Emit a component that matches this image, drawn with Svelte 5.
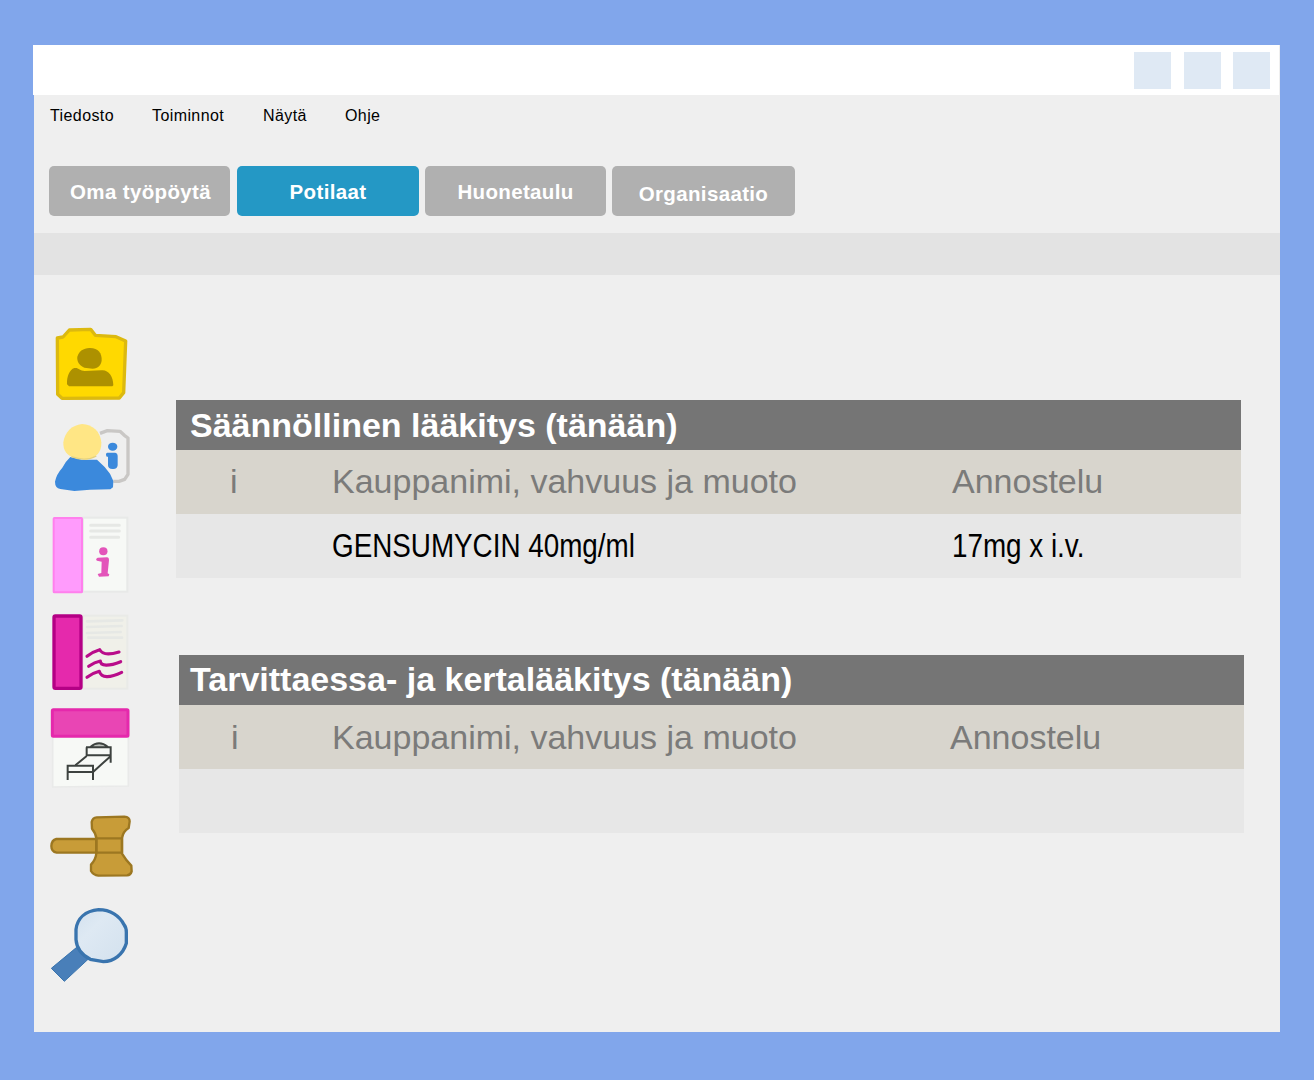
<script>
  const menu = [
    { label: 'Tiedosto', cls: 'file' },
    { label: 'Toiminnot', cls: 'actions' },
    { label: 'Näytä', cls: 'view' },
    { label: 'Ohje', cls: 'help' },
  ];
  const tabs = [
    { label: 'Oma työpöytä', cls: 'desk' },
    { label: 'Potilaat', cls: 'active' },
    { label: 'Huonetaulu', cls: 'rooms' },
    { label: 'Organisaatio', cls: 'org' },
  ];
  const tables = [
    { title: 'Säännöllinen lääkitys (tänään)', name: 'GENSUMYCIN 40mg/ml', dose: '17mg x i.v.', cls: 'regular' },
    { title: 'Tarvittaessa- ja kertalääkitys (tänään)', name: '', dose: '', cls: 'needed' },
  ];
</script>

<div class="screen">
  <div class="window">
    <header class="titlebar"><i></i><i></i><i></i></header>
    <div class="body">
      <nav class="menu">
        {#each menu as m}<span class={m.cls}>{m.label}</span>{/each}
      </nav>
      <nav class="tabs">
        {#each tabs as t}<div class="tab {t.cls}"><span>{t.label}</span></div>{/each}
      </nav>
      <div class="strip"></div>
      <div class="content">
        <aside>
          <!-- patient folder -->
          <svg width="100" height="95" viewBox="0 0 300 285">
            <path d="M52 69L69 66L88 45L152 43L166 61L228 65L257 78L251 233L238 249L66 250L53 238Z" fill="#ffd900" stroke="#dcb90f" stroke-width="10" stroke-linejoin="round" />
            <path d="M148 99C174 98 186 115 185 135C184 151 174 160 158 161L133 158C118 151 110 139 112 125C117 108 130 100 148 99Z" fill="#ad9100" />
            <path d="M103 159C116 157 119 167 134 168L184 166C204 163 220 183 220 211L217 214H87L81 208C80 185 88 164 103 159Z" fill="#ad9100" />
          </svg>
          <!-- patient information -->
          <svg width="100" height="95" viewBox="0 0 300 285" class="s2">
            <path d="M180 64L202 56L240 58L253 70L264 78V187L254 202L237 208H220" fill="#efefef" stroke="#c9c7c5" stroke-width="10" stroke-linejoin="round" />
            <ellipse cx="218" cy="104" rx="14" ry="12" fill="#3b89dc" />
            <path d="M202 122H226Q233 123 233 131V160Q232 171 220 171Q204 172 204 160V134H200Q195 124 202 122Z" fill="#3b89dc" />
            <path d="M91 135L125 143H171L194 165L210 185L220 207L219 226L211 232L150 233L103 237L61 231Q45 228 45 209Q49 187 67 167Q77 148 91 135Z" fill="#3b89dc" />
            <path d="M126 36C158 38 181 58 184 91C185 121 170 137 139 143L102 137C81 131 69 116 70 91C74 61 95 39 126 36Z" fill="#ffe685" />
            <path d="M94 134Q137 150 169 132" fill="none" stroke="#e5d27e" stroke-width="4" />
          </svg>
          <!-- information booklet -->
          <svg width="100" height="95" viewBox="0 0 300 285" class="s3">
            <rect x="129" y="38" width="133" height="222" fill="#f7f9f6" stroke="#e8e9e8" stroke-width="6" />
            <path d="M152 61H238M152 78H238M152 97H236" stroke="#e6e8e5" stroke-width="9" stroke-linecap="round" />
            <rect x="41" y="39" width="85" height="223" rx="2" fill="#ff9bfc" stroke="#ff80ed" stroke-width="6" />
            <ellipse cx="190" cy="139" rx="12.500" ry="12" fill="#e355ba" />
            <path d="M173 158L201 157Q207 157 207 166L203 205L208 208L206 214L177 215L173 207L184 204L185 170L171 167Q165 162 173 158Z" fill="#e355ba" />
          </svg>
          <!-- monitoring booklet -->
          <svg width="100" height="95" viewBox="0 0 300 285" class="s4">
            <rect x="129" y="32" width="133" height="219" fill="#f0f0e9" stroke="#e9eae7" stroke-width="6" />
            <path d="M141 49L247 46M141 66L245 63M141 84L242 81M145 98H246" stroke="#e6e8e5" stroke-width="8" stroke-linecap="round" />
            <rect x="42" y="33" width="81" height="217" rx="4" fill="#e529ac" stroke="#b40085" stroke-width="10" />
            <g fill="none" stroke="#b90c8a" stroke-width="9.500" stroke-linecap="round" stroke-linejoin="round"><path d="M141 154Q160 139 179 134C186 148 207 150 237 141" /><path d="M146 184Q164 171 181 168C181 184 207 184 242 170" /><path d="M141 217Q158 204 178 199C184 220 210 219 245 202" /></g>
          </svg>
          <!-- ward calendar -->
          <svg width="100" height="95" viewBox="0 0 300 285" class="s5">
            <path d="M38 108H265V258L38 261Z" fill="#f7f9f6" stroke="#e9eae9" stroke-width="5" />
            <rect x="37" y="29" width="227" height="80" rx="3" fill="#e945b4" stroke="#e529ac" stroke-width="9" />
            <path d="M151 143Q159 132 177 130Q194 130 204 143Z" fill="#bcc0bb" />
            <g fill="none" stroke="#3d423f" stroke-width="6"><path d="M151 141Q177 119 204 141M138 142H212V188M140 142V166H211M140 168L106 196M210 170L160 215" /><path d="M83 240V197H159V240M83 216H159" /></g>
          </svg>
          <!-- gavel -->
          <svg width="100" height="85" viewBox="0 0 300 255" class="s6">
            <g fill="#c89c38" stroke="#9c7721" stroke-width="7" stroke-linejoin="round"><path d="M49 102H171V143H50Q34 140 34 123Q35 105 49 102Z" /><path d="M155 51Q158 38 170 37L253 35Q269 36 269 49L266 69Q249 79 246 100V146Q258 166 274 182L275 199Q272 210 261 211L175 212Q160 210 153 198V179Q167 164 169 145V100Q168 86 156 71Z" /><path d="M169 100H246V143H169Z" fill="none" /></g>
          </svg>
          <!-- search -->
          <svg width="100" height="95" viewBox="0 0 300 285" class="s7">
            <defs><linearGradient id="glass" x2="1" y2="1"><stop stop-color="#d3e1ef" /><stop offset=".35" stop-color="#dee9f3" /><stop offset="1" stop-color="#d3e1ee" /></linearGradient></defs>
            <path d="M110 148L144 184L73 250L34 211Z" fill="#497fb9" stroke="#3974ae" stroke-width="3" />
            <path d="M176 35C211 35 239 54 252 80C257 86 259 94 259 103V136C249 170 222 190 190 191L151 184C125 171 110 151 108 125V94C112 61 135 39 176 35Z" fill="url(#glass)" stroke="#3974ae" stroke-width="10" />
          </svg>
        </aside>
        <main>
          {#each tables as t}
            <section class={t.cls}>
              <h2>{t.title}</h2>
              <div class="row head"><span class="info">i</span><span class="name">Kauppanimi, vahvuus ja muoto</span><span class="dose">Annostelu</span></div>
              <div class="row data"><span class="info"></span><span class="name">{t.name}</span><span class="dose">{t.dose}</span></div>
            </section>
          {/each}
        </main>
      </div>
    </div>
  </div>
</div>

<style>
  :global(body) { background: #81a6eb; }
  .screen { box-sizing: border-box; width: 1314px; height: 1080px; padding: 45px 34px 48px 33px; background: #81a6eb; font-family: "Liberation Sans", Arial, sans-serif; overflow: hidden; }
  .window { width: 1247px; }
  .titlebar { box-sizing: border-box; width: 1246px; height: 50px; background: #fff; box-shadow: 1px 0 #efefef; display: flex; justify-content: flex-end; padding: 7px 9px 0 0; }
  .titlebar i { width: 37px; height: 37px; background: #dfe9f4; margin-left: 13px; }
  .titlebar i:last-child { margin-left: 12px; }
  .body { height: 937px; margin-left: 1px; background: #efefef; }
  .menu { display: flex; height: 71px; padding-left: 16px; box-sizing: border-box; padding-top: 11px; font-size: 16px; line-height: 20px; letter-spacing: .4px; color: #000; }
  .menu .file { width: 102px; }
  .menu .actions { width: 111px; }
  .menu .view { width: 82px; }
  .tabs { display: grid; grid-template-columns: 181px 182px 181px 183px; column-gap: 6px; height: 67px; padding-left: 15px; }
  .tab { height: 50px; box-sizing: border-box; border-radius: 5px; background: #b0b0b0; color: #fff; font-size: 20.500px; font-weight: bold; letter-spacing: .35px; line-height: 52px; text-align: center; white-space: nowrap; }
  .tab.desk { padding-left: 2px; }
  .tab.active, .tab.rooms, .tab.org { margin-left: 1px; margin-right: -1px; }
  .tab.active { background: #2498c5; }
  .tab.org { line-height: 56px; }
  .strip { height: 42px; background: #e3e3e3; }
  .content { display: flex; height: 757px; }
  aside { width: 142px; padding: 40px 0 0 6px; box-sizing: border-box; }
  aside svg { display: block; }
  .s2 { margin-top: 2px; }
  .s3 { margin-top: -2px; }
  .s4 { margin-top: 5px; }
  .s6 { margin-top: 10px; }
  .s7 { margin-top: 8px; }
  main { padding-top: 125px; }
  section { width: 1065px; margin-bottom: 77px; }
  .needed { margin-left: 3px; }
  h2 { margin: 0; height: 50px; line-height: 50px; padding-left: 14px; background: #757575; color: #fff; font-size: 34px; font-weight: bold; white-space: nowrap; }
  .row { display: grid; grid-template-columns: 156px 620px 1fr; height: 64px; line-height: 64px; font-size: 34px; white-space: nowrap; }
  .head { background: #d8d5cd; color: #7b7b7a; }
  .regular .head { line-height: 62px; }
  .data { background: #e7e7e7; color: #000; line-height: 62px; }
  .info { padding-left: 54px; }
  .data .name, .data .dose { transform: scaleX(.818); transform-origin: left; }
  .needed h2 { padding-left: 11px; line-height: 48px; }
  .needed .row { grid-template-columns: 153px 618px 1fr; }
  .needed .info { padding-left: 52px; }
</style>
